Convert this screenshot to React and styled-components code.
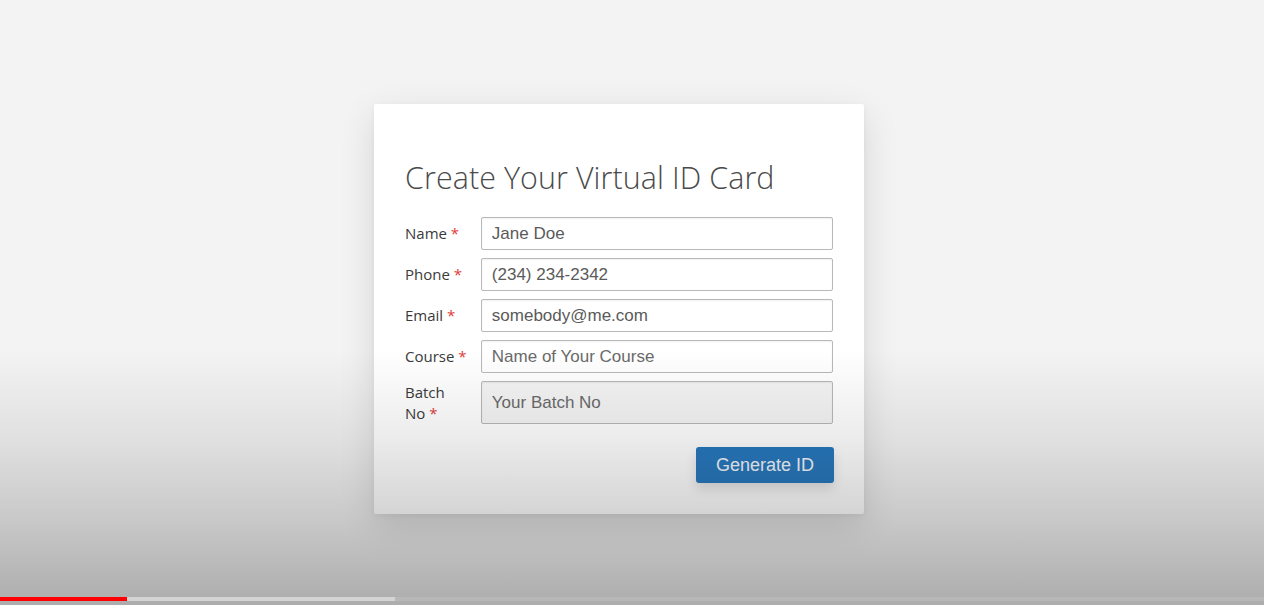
import React from "react";
import styled, { createGlobalStyle } from "styled-components";

const Global = createGlobalStyle`
  html, body { margin: 0; padding: 0; }
  body { background: #f3f3f4; font-family: "Open Sans", sans-serif; overflow: hidden; }
`;

const Page = styled.div`
  position: relative;
  width: 1264px;
  height: 605px;
  background: #f3f3f4;
  display: flex;
  justify-content: center;
  align-items: flex-start;
  padding: 104px 26px 0 0;
  box-sizing: border-box;
  overflow: hidden;
`;

const Card = styled.div`
  width: 490px;
  height: 410px;
  box-sizing: border-box;
  background: #fff;
  border-radius: 2px;
  padding: 54px 31px 0 31px;
  box-shadow: 0 12px 36px rgba(0, 0, 0, 0.12), 0 2px 6px rgba(0, 0, 0, 0.05);
`;

const Title = styled.h1`
  margin: 0 0 19px 0;
  font-family: "Open Sans", sans-serif;
  font-weight: 300;
  font-size: 30.4px;
  line-height: 40px;
  color: #4a4a4a;
  letter-spacing: 0.1px;
`;

const Form = styled.div`
  display: flex;
  flex-direction: column;
  gap: 8px;
`;

const Row = styled.div`
  display: flex;
  align-items: center;
`;

const Label = styled.label`
  width: 76px;
  font-family: "Open Sans", sans-serif;
  font-size: 15px;
  line-height: 21px;
  color: #3a3a3a;
`;

const Star = styled.span`
  color: #e03a3a;
`;

const Input = styled.input`
  width: 353px;
  height: ${(p) => (p.$tall ? "43px" : "33px")};
  box-sizing: border-box;
  border: 1px solid #b8b8b8;
  border-radius: 2px;
  padding: 0 10px;
  font-family: "Liberation Sans", Arial, sans-serif;
  font-size: 17px;
  color: #5a5a5a;
  background: ${(p) => (p.$shade ? "#f4f4f4" : "#fff")};
  box-shadow: inset 0 1px 2px rgba(0, 0, 0, 0.06);
  &::placeholder { color: #6a6a6a; }
`;

const Actions = styled.div`
  display: flex;
  justify-content: flex-end;
  margin-top: 23px;
  padding-right: 0;
`;

const Button = styled.button`
  width: 138px;
  height: 36px;
  margin-right: -1px;
  border: none;
  border-radius: 3px;
  background: #2878bd;
  color: #f2f6fb;
  font-family: "Liberation Sans", Arial, sans-serif;
  font-size: 18px;
  box-shadow: 0 6px 12px rgba(0, 0, 0, 0.12);
  cursor: pointer;
`;

const Shade = styled.div`
  position: absolute;
  inset: 0;
  pointer-events: none;
  background: linear-gradient(
    to bottom,
    rgba(0, 0, 0, 0) 0px,
    rgba(0, 0, 0, 0) 350px,
    rgba(0, 0, 0, 0.08) 440px,
    rgba(0, 0, 0, 0.17) 514px,
    rgba(0, 0, 0, 0.29) 605px
  );
`;

const Progress = styled.div`
  position: absolute;
  left: 0;
  right: 0;
  top: 597px;
  height: 4px;
  background: rgba(255, 255, 255, 0.12);
`;

const Buffered = styled.div`
  position: absolute;
  left: 0;
  top: 0;
  bottom: 0;
  background: rgba(255, 255, 255, 0.4);
`;

const Played = styled.div`
  position: absolute;
  left: 0;
  top: 0;
  bottom: 0;
  background: #f00;
`;

const fields = [
  { label: "Name", value: "Jane Doe" },
  { label: "Phone", value: "(234) 234-2342" },
  { label: "Email", value: "somebody@me.com" },
  { label: "Course", placeholder: "Name of Your Course" },
];

export default function App() {
  return (
    <>
      <Global />
      <Page>
        <Card>
          <Title>Create Your Virtual ID Card</Title>
          <Form>
            {fields.map((f) => (
              <Row key={f.label}>
                <Label>
                  {f.label} <Star>*</Star>
                </Label>
                <Input defaultValue={f.value} placeholder={f.placeholder} />
              </Row>
            ))}
            <Row>
              <Label>
                Batch
                <br />
                No <Star>*</Star>
              </Label>
              <Input $tall $shade placeholder="Your Batch No" />
            </Row>
          </Form>
          <Actions>
            <Button>Generate ID</Button>
          </Actions>
        </Card>
        <Shade />
        <Progress>
          <Buffered style={{ width: "395px" }} />
          <Played style={{ width: "127px" }} />
        </Progress>
      </Page>
    </>
  );
}
